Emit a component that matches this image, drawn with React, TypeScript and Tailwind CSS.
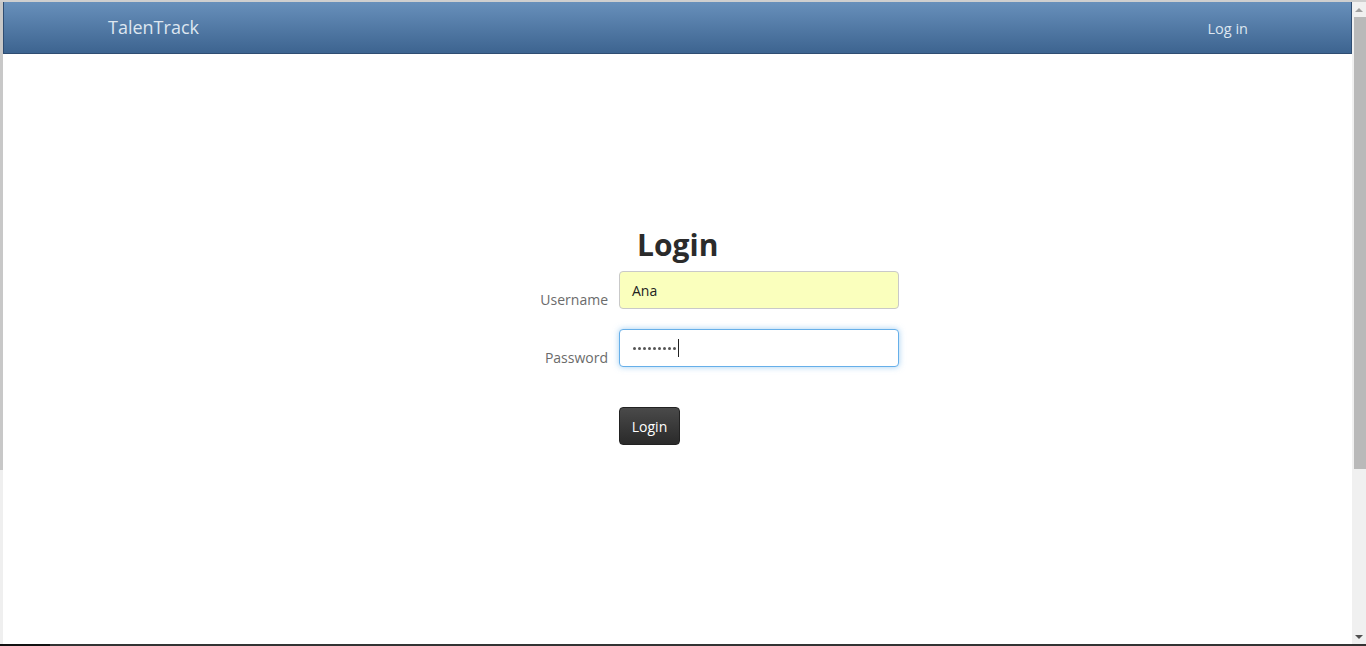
import React from "react";

export default function App() {
  const font = { fontFamily: '"Open Sans", "Noto Sans", sans-serif' };
  return (
    <div className="w-[1366px] h-[646px] overflow-hidden bg-white flex flex-col" style={font}>
      {/* top strip */}
      <div className="h-[2px] bg-[#cfcfcf] shrink-0" />
      <div className="flex flex-1 min-h-0">
        {/* left edge */}
        <div className="w-[3px] flex flex-col shrink-0">
          <div className="h-[468px] bg-[#c8c8c8]" />
          <div className="flex-1 bg-[#efefef]" />
        </div>
        {/* page */}
        <div className="w-[1349px] flex flex-col shrink-0">
          <div className="h-[52px] bg-gradient-to-b from-[#6890bb] to-[#3d6490] border border-t-0 border-[#2f4d72] flex items-center justify-between shrink-0">
            <span className="ml-[104px] text-[18px] text-[#dde6f0] leading-none mt-[-2px]">TalenTrack</span>
            <span className="mr-[103px] text-[14.5px] text-[#dde6f0] leading-none mt-[3px]">Log in</span>
          </div>
          <div className="flex-1 flex flex-col pt-[174px]">
            <div className="flex flex-col">
              <h1 className="ml-[634px] text-[30px] font-bold text-[#2b2b2b] leading-[33px]">Login</h1>
              <div className="flex mt-[10px] items-end">
                <label className="w-[605px] text-right text-[14px] text-[#6b6b6b] leading-5 mb-[-1px]">Username</label>
                <div className="ml-[11px] w-[280px] h-[38px] rounded-[4px] border border-[#c9c9c9] bg-[#faffbd] flex items-center px-[12px] text-[14px] text-[#222]">
                  Ana
                </div>
              </div>
              <div className="flex mt-[20px] items-end">
                <label className="w-[605px] text-right text-[14px] text-[#6b6b6b] leading-5 mb-[-1px]">Password</label>
                <div className="ml-[11px] w-[280px] h-[38px] rounded-[4px] border border-[#66afe9] shadow-[0_0_6px_rgba(102,175,233,0.6)] bg-white flex items-center pl-[13px] pr-[12px]">
                  <div className="flex gap-[2px] items-center">
                    {Array.from({ length: 9 }).map((_, i) => (
                      <span key={i} className="block w-[3px] h-[3px] rounded-full bg-[#555]" />
                    ))}
                  </div>
                  <span className="ml-[2px] w-px h-[18px] bg-[#222]" />
                </div>
              </div>
              <div className="flex mt-[40px]">
                <div className="ml-[616px] w-[61px] h-[38px] rounded-[4px] border border-[#222] bg-gradient-to-b from-[#4a4a4a] to-[#2a2a2a] text-white text-[14px] flex items-center justify-center">
                  Login
                </div>
              </div>
            </div>
          </div>
        </div>
        {/* scrollbar */}
        <div className="w-[14px] bg-[#f0f0f0] flex flex-col items-center shrink-0">
          <div className="h-[15px] flex items-center justify-center">
            <div className="w-0 h-0 border-l-[4px] border-r-[4px] border-b-[4px] border-l-transparent border-r-transparent border-b-[#a0a0a0]" />
          </div>
          <div className="w-[12px] h-[452px] bg-[#b9b9b9] ml-[1px]" />
          <div className="flex-1" />
          <div className="h-[15px] flex items-center justify-center">
            <div className="w-0 h-0 border-l-[4px] border-r-[4px] border-t-[4px] border-l-transparent border-r-transparent border-t-[#505050]" />
          </div>
        </div>
      </div>
      <div className="h-[2px] flex shrink-0">
        <div className="w-[50px] bg-[#111]" />
        <div className="flex-1 bg-[#333]" />
      </div>
    </div>
  );
}
